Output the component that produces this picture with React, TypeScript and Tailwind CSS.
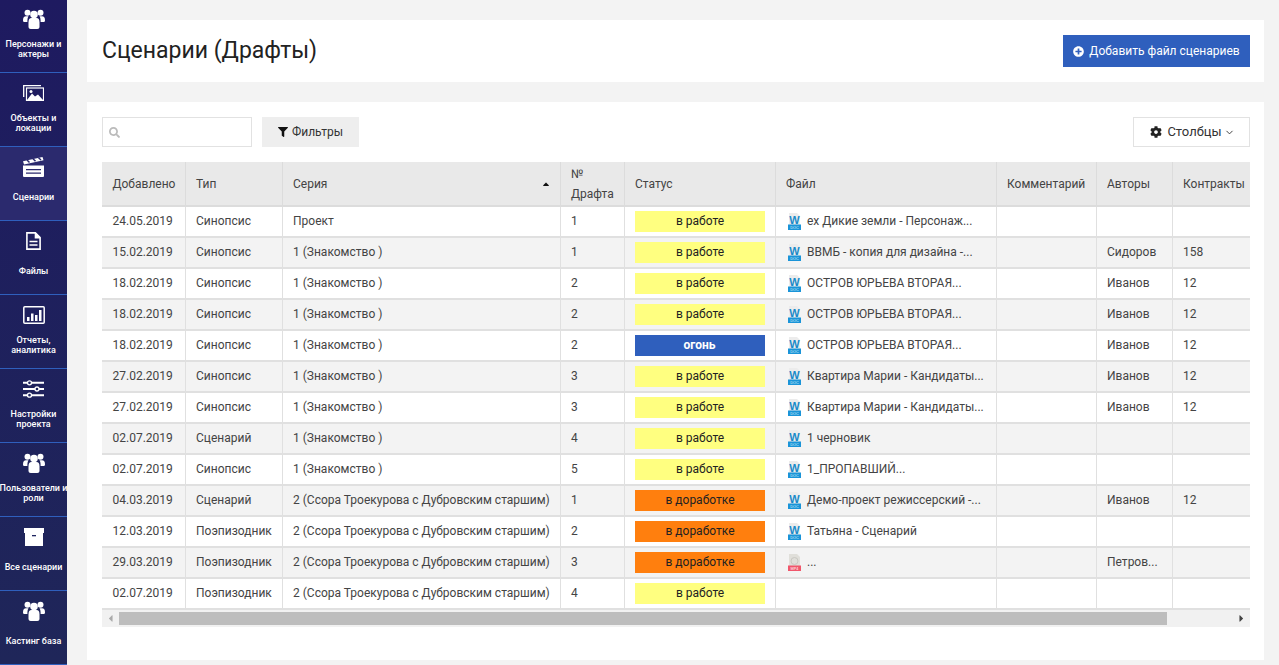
import React from "react";
import { FaFilter, FaSearch, FaCog, FaPlusCircle, FaCaretLeft, FaCaretRight, FaCaretUp } from "react-icons/fa";
import { LuChevronDown } from "react-icons/lu";

const Users = () => (
  <svg viewBox="0 0 22 20" className="w-[22px] h-[20px]" fill="white">
    <circle cx="4.500" cy="3.800" r="3" />
    <circle cx="17.500" cy="3.800" r="3" />
    <path d="M0 11.500C0 8.500 1 7.200 3 7.200h2.500C4.700 8.500 4.300 10.200 4.400 13H1.300C.5 13 0 12.400 0 11.500z" />
    <path d="M22 11.500c0-3-1-4.300-3-4.300h-2.500c.8 1.300 1.200 3 1.100 5.800h3.100c.8 0 1.300-.6 1.300-1.500z" />
    <circle cx="11" cy="5.500" r="3.800" />
    <path d="M5.500 13.500c0-3.300 1-4.500 3-4.500h5c2 0 3 1.200 3 4.500v4.200c0 1.300-.9 2.300-2.200 2.300H7.700c-1.300 0-2.200-1-2.200-2.300z" />
  </svg>
);
const Picture = () => (
  <svg viewBox="0 0 21 16" className="w-[21px] h-[16px]">
    <path d="M.7 12V.7H18" fill="none" stroke="white" strokeWidth="1.300" />
    <rect x="3.500" y="3" width="17" height="12.500" fill="none" stroke="white" strokeWidth="1.200" />
    <path fill="white" d="M4 15 9 8.500l3 3 3-2 5 5.500z" />
    <circle cx="8" cy="6.500" r="1.500" fill="white" />
  </svg>
);
const Clapper = () => (
  <svg viewBox="0 0 21 20" className="w-[21px] h-[20px]" fill="white">
    <path d="M0 4.200 19.500 0 20.500 3.300 1 7.500z" />
    <path d="M0 8.500h21V19a1 1 0 0 1-1 1H1a1 1 0 0 1-1-1z" />
    <path d="M3 12h15v1.300H3zM3 15.500h15v1.300H3z" fill="#2b2a6e" />
    <path d="M4 3 6.500 5.500M10 1.800 12.500 4.200M15.500.8 18 3" stroke="#2b2a6e" strokeWidth="1.500" />
  </svg>
);
const FileIcon = () => (
  <svg viewBox="0 0 15 18" className="w-[15px] h-[18px]" fill="none" stroke="white" strokeWidth="1.600">
    <path d="M.9.9h8.500L14.100 5.600v11.500H.9z" />
    <path d="M9.500.9v4.700h4.600" fill="white" />
    <path d="M3.500 9.500h8M3.500 13h8" strokeWidth="1.500" />
  </svg>
);
const Chart = () => (
  <svg viewBox="0 0 22 18" className="w-[22px] h-[18px]">
    <rect x="0.800" y="0.800" width="20.400" height="16.400" rx="1" fill="none" stroke="white" strokeWidth="1.500" />
    <path fill="white" d="M4 11h2.500v4H4zM8 7.500h2.500V15H8zM12 9h2.500v6H12zM16 4h2.500v11H16z" />
  </svg>
);
const Sliders = () => (
  <svg viewBox="0 0 21 18" className="w-[21px] h-[18px]" fill="none" stroke="white">
    <path d="M0 2.800h21M0 9h21M0 15.200h21" strokeWidth="2" />
    <circle cx="6.500" cy="2.800" r="2" fill="#1f2560" strokeWidth="1.300" />
    <circle cx="14" cy="9" r="2" fill="#1f2560" strokeWidth="1.300" />
    <circle cx="6.500" cy="15.200" r="2" fill="#1f2560" strokeWidth="1.300" />
  </svg>
);
const Archive = () => (
  <svg viewBox="0 0 20 18" className="w-[20px] h-[18px]" fill="white">
    <rect x="0" y="0" width="20" height="5" />
    <path d="M1 5h18v13H1z" />
    <rect x="8" y="7" width="4" height="1.300" fill="#1f2560" />
  </svg>
);

const DocIcon = () => (
  <svg viewBox="0 0 13 17" className="w-[13px] h-[17px] shrink-0 mt-[1px]">
    <path d="M1 0h8l3 3v9H1z" fill="#ececec" />
    <text x="6.500" y="10.500" textAnchor="middle" fontSize="11" fontWeight="700" fontFamily="Liberation Sans, sans-serif" fill="#1a8ac9">W</text>
    <rect x="0" y="11.500" width="13" height="5.500" fill="#1a94d8" />
    <text x="6.500" y="15.800" textAnchor="middle" fontSize="3.800" fontFamily="Liberation Sans, sans-serif" fill="#dff1fb">DOC</text>
  </svg>
);
const MpIcon = () => (
  <svg viewBox="0 0 13 17" className="w-[13px] h-[17px] shrink-0 mt-[1px]">
    <path d="M1 0h8l3 3v9H1z" fill="#e0dfda" />
    <circle cx="6.500" cy="7" r="3.500" fill="none" stroke="#c9c8c2" strokeWidth="1" />
    <rect x="0" y="11.500" width="13" height="5.500" fill="#f0566b" />
    <text x="6.500" y="15.800" textAnchor="middle" fontSize="3.800" fontFamily="Liberation Sans, sans-serif" fill="#fff">MP4</text>
  </svg>
);

const nav: [React.ReactNode, string[], boolean?][] = [
  [<Users />, ["Персонажи и", "актеры"]],
  [<Picture />, ["Объекты и", "локации"]],
  [<Clapper />, ["Сценарии"], true],
  [<FileIcon />, ["Файлы"]],
  [<Chart />, ["Отчеты,", "аналитика"]],
  [<Sliders />, ["Настройки", "проекта"]],
  [<Users />, ["Пользователи и", "роли"]],
  [<Archive />, ["Все сценарии"]],
  [<Users />, ["Кастинг база"]],
];

const S1 = "1 (Знакомство )";
const S2 = "2 (Ссора Троекурова с Дубровским старшим)";
type Row = [string, string, string, string, "w" | "f" | "d", string, "doc" | "mp" | "", string, string];
const rows: Row[] = [
  ["24.05.2019", "Синопсис", "Проект", "1", "w", "ех Дикие земли - Персонаж...", "doc", "", ""],
  ["15.02.2019", "Синопсис", S1, "1", "w", "ВВМБ - копия для дизайна -...", "doc", "Сидоров", "158"],
  ["18.02.2019", "Синопсис", S1, "2", "w", "ОСТРОВ ЮРЬЕВА ВТОРАЯ...", "doc", "Иванов", "12"],
  ["18.02.2019", "Синопсис", S1, "2", "w", "ОСТРОВ ЮРЬЕВА ВТОРАЯ...", "doc", "Иванов", "12"],
  ["18.02.2019", "Синопсис", S1, "2", "f", "ОСТРОВ ЮРЬЕВА ВТОРАЯ...", "doc", "Иванов", "12"],
  ["27.02.2019", "Синопсис", S1, "3", "w", "Квартира Марии - Кандидаты...", "doc", "Иванов", "12"],
  ["27.02.2019", "Синопсис", S1, "3", "w", "Квартира Марии - Кандидаты...", "doc", "Иванов", "12"],
  ["02.07.2019", "Сценарий", S1, "4", "w", "1 черновик", "doc", "", ""],
  ["02.07.2019", "Синопсис", S1, "5", "w", "1_ПРОПАВШИЙ...", "doc", "", ""],
  ["04.03.2019", "Сценарий", S2, "1", "d", "Демо-проект режиссерский -...", "doc", "Иванов", "12"],
  ["12.03.2019", "Поэпизодник", S2, "2", "d", "Татьяна - Сценарий", "doc", "", ""],
  ["29.03.2019", "Поэпизодник", S2, "3", "d", "...", "mp", "Петров...", ""],
  ["02.07.2019", "Поэпизодник", S2, "4", "w", "", "", "", ""],
];

const Status = ({ s }: { s: "w" | "f" | "d" }) =>
  s === "w" ? (
    <div className="w-[130px] h-[21px] bg-[#ffff80] text-[#222] text-center leading-[20px] pl-[1px]">в работе</div>
  ) : s === "d" ? (
    <div className="w-[130px] h-[21px] bg-[#ff7f0e] text-[#222] text-center leading-[20px] pl-[1px]">в доработке</div>
  ) : (
    <div className="w-[130px] h-[21px] bg-[#2f5fbd] text-white font-bold text-center leading-[20px]">огонь</div>
  );

const th = "border-r border-b-2 border-[#dcdcdc] pl-[10.5px] pr-[10px] text-left font-normal align-middle last:border-r-0";
const td = "border-r border-b-2 border-[#e0e0e0] pl-[10.5px] pr-[10px] pb-[2px] align-middle whitespace-nowrap last:border-r-0";
const tdStatus = "border-r border-b-2 border-[#e0e0e0] pl-[10px] pr-[10px] align-middle whitespace-nowrap";

export default function App() {
  return (
    <div className="flex w-[1279px] h-[665px] overflow-hidden bg-[#f3f3f3] [font-family:Roboto,sans-serif] text-[12px] text-[#444]">
      <aside className="w-[67px] shrink-0 bg-gradient-to-b from-[#1e1a60] to-[#1f2659] text-white">
        <div className="-mt-[1px]">
          {nav.map(([icon, label, active], i) => (
            <div
              key={i}
              className={`h-[74px] border-b border-[#2f5fbd] flex flex-col items-center text-center text-[9px] leading-[10px] font-medium ${active ? "bg-[#2b2a6e]" : ""}`}
            >
              <div className="h-[36px] mt-[2px] flex items-center justify-center shrink-0">{icon}</div>
              <div className="flex flex-col justify-center h-[22px] mt-[1px] whitespace-nowrap">
                {label.map((l) => (
                  <div key={l}>{l}</div>
                ))}
              </div>
            </div>
          ))}
        </div>
      </aside>
      <main className="ml-[20px] w-[1177px] pt-[20px] flex flex-col gap-[20px]">
        <section className="bg-white h-[62px] pl-[15px] pr-[14px] flex items-center justify-between">
          <h1 className="text-[23px] text-[#222] font-normal">Сценарии (Драфты)</h1>
          <button className="w-[187px] h-[32px] bg-[#2f5fbd] text-white text-[12px] flex items-center justify-center gap-[5px]">
            <FaPlusCircle className="w-[11px] h-[11px]" />
            Добавить файл сценариев
          </button>
        </section>
        <section className="bg-white h-[558px] pl-[15px] pr-[14px] pt-[15px]">
          <div className="flex items-center h-[30px] gap-[10px]">
            <div className="w-[150px] h-[30px] border border-[#e2e2e2] flex items-center pl-[6px]">
              <FaSearch className="w-[11px] h-[11px] text-[#bbb]" />
            </div>
            <button className="w-[97px] h-[30px] bg-[#eeeeee] text-[#333] flex items-center justify-center gap-[4px]">
              <FaFilter className="w-[10px] h-[10px] text-[#111]" />
              Фильтры
            </button>
            <button className="ml-auto w-[117px] h-[30px] border border-[#e2e2e2] text-[#333] flex items-center justify-center gap-[5px] text-[13px] pl-[2px]">
              <FaCog className="w-[12px] h-[12px] text-[#222]" />
              Столбцы
              <LuChevronDown className="w-[11px] h-[11px] -ml-[3px]" />
            </button>
          </div>
          <div className="mt-[15px] w-[1148px] overflow-hidden">
            <table className="table-fixed border-collapse w-[1168px]">
              <colgroup>
                <col className="w-[83px]" />
                <col className="w-[97px]" />
                <col className="w-[278px]" />
                <col className="w-[64px]" />
                <col className="w-[151px]" />
                <col className="w-[221px]" />
                <col className="w-[100px]" />
                <col className="w-[76px]" />
                <col className="w-[98px]" />
              </colgroup>
              <thead>
                <tr className="h-[44px] bg-[#e9e9e9] leading-[20px]">
                  <th className={th}>Добавлено</th>
                  <th className={th}>Тип</th>
                  <th className={th}>
                    <div className="flex items-center justify-between">
                      Серия
                      <FaCaretUp className="w-[10px] h-[10px] text-[#111] mr-[-1px]" />
                    </div>
                  </th>
                  <th className={th}>№<br />Драфта</th>
                  <th className={th}>Статус</th>
                  <th className={th}>Файл</th>
                  <th className={th}>Комментарий</th>
                  <th className={th}>Авторы</th>
                  <th className={th}>Контракты</th>
                </tr>
              </thead>
              <tbody>
                {rows.map((r, i) => (
                  <tr key={i} className={`h-[31px] ${i % 2 ? "bg-[#f3f3f3]" : "bg-white"}`}>
                    <td className={td}>{r[0]}</td>
                    <td className={td}>{r[1]}</td>
                    <td className={td}>{r[2]}</td>
                    <td className={td}>{r[3]}</td>
                    <td className={tdStatus}><Status s={r[4]} /></td>
                    <td className={td}>
                      <div className="flex items-center gap-[6px] pl-[2px]">
                        {r[6] === "doc" && <DocIcon />}
                        {r[6] === "mp" && <MpIcon />}
                        <span>{r[5]}</span>
                      </div>
                    </td>
                    <td className={td}></td>
                    <td className={td}>{r[7]}</td>
                    <td className={td}>{r[8]}</td>
                  </tr>
                ))}
              </tbody>
            </table>
            <div className="h-[17px] bg-[#f1f1f1] flex items-center">
              <div className="w-[17px] flex justify-center text-[#aaa]"><FaCaretLeft className="w-[11px] h-[11px]" /></div>
              <div className="w-[1048px] h-[13px] bg-[#bdbdbd]" />
              <div className="ml-auto w-[17px] flex justify-center text-[#444]"><FaCaretRight className="w-[11px] h-[11px]" /></div>
            </div>
          </div>
        </section>
      </main>
    </div>
  );
}
